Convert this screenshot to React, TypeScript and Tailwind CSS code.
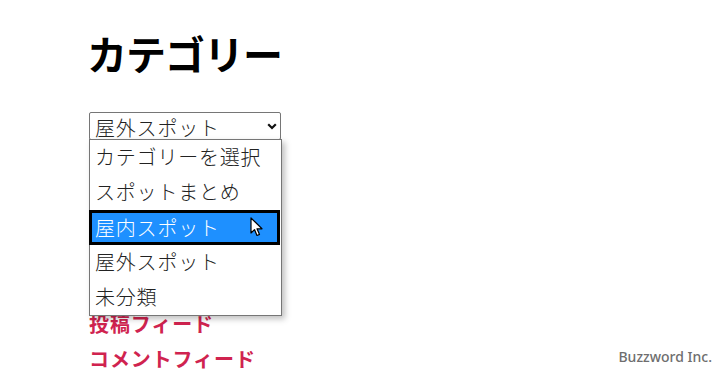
import React from "react";

const items = ["カテゴリーを選択", "スポットまとめ", "屋内スポット", "屋外スポット", "未分類"];

export default function App() {
  return (
    <div
      className="relative w-[728px] h-[376px] overflow-hidden bg-white text-black"
      style={{ fontFamily: '"Noto Sans CJK JP", "Noto Sans", sans-serif' }}
    >
      <div className="pl-[89px] pt-[29px]">
        <h1 className="-ml-[2px] text-[40px] leading-[48px] font-bold tracking-[-1px]">カテゴリー</h1>
        <div className="relative mt-[35px] w-[192px]">
          <div className="h-[28px] overflow-hidden rounded-[2px] border border-[#767676] bg-white pl-[5px] pr-[3px] flex items-start justify-between">
            <span className="text-[20px] leading-[30px] font-light tracking-[0.8px] text-[#222]">屋外スポット</span>
            <svg width="10" height="7" viewBox="0 0 10 7" className="mt-[10px]">
              <path d="M1.2 1.2 L5 5 L8.8 1.2" fill="none" stroke="#111" strokeWidth="2.2" />
            </svg>
          </div>
          <div className="absolute left-0 top-[27px] z-10 w-[193px] border border-[#767676] bg-white shadow-[3px_3px_6px_rgba(0,0,0,0.25)]">
            {items.map((it, i) =>
              i === 2 ? (
                <div
                  key={it}
                  className="relative -ml-px h-[35px] w-[191px] border-[3px] border-black bg-[#1e90ff] pl-[3px] text-[20px] leading-[29px] font-light tracking-[0.8px] text-white"
                >
                  {it}
                  <svg
                    width="14"
                    height="20"
                    viewBox="0 0 14 20"
                    className="absolute left-[158px] top-[4px]"
                  >
                    <path
                      d="M1 1 L1 16 L4.5 12.6 L7 18.5 L9.5 17.4 L7 11.8 L12 11.8 Z"
                      fill="#fff"
                      stroke="#000"
                      strokeWidth="1.2"
                      strokeLinejoin="round"
                    />
                  </svg>
                </div>
              ) : (
                <div key={it} className="h-[35px] pl-[5px] text-[20px] leading-[33px] font-light tracking-[0.8px] text-[#222]">
                  {it}
                </div>
              )
            )}
          </div>
        </div>
        <div className="mt-[166px] flex flex-col">
          <a className="text-[20px] leading-[35px] font-bold tracking-[0.9px] text-[#d0234f]">投稿フィード</a>
          <a className="text-[20px] leading-[35px] font-bold tracking-[0.9px] text-[#d0234f]">コメントフィード</a>
        </div>
      </div>
      <div
        className="absolute right-[16px] bottom-[9px] text-[14px] font-medium text-[#6e6e6e]"
        style={{ fontFamily: '"Noto Sans", "Open Sans", sans-serif' }}
      >
        Buzzword Inc.
      </div>
    </div>
  );
}
